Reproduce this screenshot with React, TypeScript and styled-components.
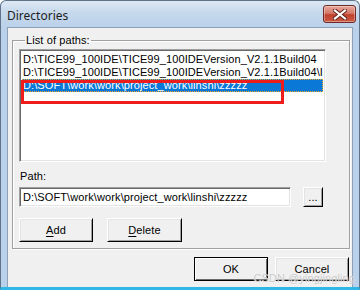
import styled, { createGlobalStyle } from 'styled-components'

const Global = createGlobalStyle`
  html, body {
    margin: 0;
    padding: 0;
    background: #ffffff;
  }
  * {
    box-sizing: border-box;
  }
`

const paths = [
  'D:\\TICE99_100IDE\\TICE99_100IDEVersion_V2.1.1Build04',
  'D:\\TICE99_100IDE\\TICE99_100IDEVersion_V2.1.1Build04\\Include',
  'D:\\SOFT\\work\\work\\project_work\\linshi\\zzzzz',
]

const Window = styled.div`
  position: relative;
  width: 360px;
  height: 290px;
  display: flex;
  flex-direction: column;
  background: linear-gradient(180deg, #dde8f4 0px, #c6d8ec 12px, #b9d1ea 28px, #b9d1ea 100%);
  border: 1px solid #5f7389;
  border-bottom: 3px solid #2fb8e6;
  border-radius: 6px 6px 0 0;
  font-family: 'Liberation Sans', Arial, sans-serif;
  font-size: 11px;
  letter-spacing: 0.1px;
  color: #000;
`

const TitleBar = styled.div`
  height: 26px;
  display: flex;
  align-items: flex-start;
  padding-left: 6px;
`

const Title = styled.span`
  font-family: 'Noto Sans', 'Open Sans', sans-serif;
  font-size: 12px;
  letter-spacing: 0;
  line-height: 16px;
  margin-top: 7px;
  color: #1e1e1e;
`

const CloseButton = styled.div`
  margin-left: auto;
  margin-right: 3px;
  margin-top: 4px;
  width: 33px;
  height: 18px;
  border: 1px solid #6e2a25;
  border-radius: 3px;
  background: linear-gradient(180deg, #e9a89b 0%, #d47a6a 45%, #c0412d 55%, #cc5a45 100%);
  box-shadow: inset 0 0 0 1px rgba(255, 255, 255, 0.35);
  display: flex;
  align-items: center;
  justify-content: center;
`

const Client = styled.div`
  flex: 1;
  margin: 0 6px 0 6px;
  background: #f0f0f0;
  border: 1px solid #8da1b7;
  border-bottom: none;
  display: flex;
  flex-direction: column;
  padding: 6px 2px 0 4px;
`

const Group = styled.fieldset`
  margin: 0;
  padding: 2px 23px 6px 6px;
  border: 1px solid #a0a0a0;
  box-shadow: 1px 1px 0 #ffffff, inset 1px 1px 0 #ffffff;
  min-width: 0;
`

const Legend = styled.legend`
  padding: 0 1px;
  margin-left: 6px;
  line-height: 13px;
  font-size: 11px;
`

const ListBox = styled.div`
  height: 113px;
  background: #ffffff;
  border: 1px solid #a0a0a0;
  border-right-color: #ffffff;
  border-bottom-color: #ffffff;
  box-shadow: inset 1px 1px 0 #696969, inset -1px -1px 0 #e3e3e3;
  padding: 3px 2px;
  overflow: hidden;
`

const Row = styled.div<{ $selected?: boolean }>`
  height: 13px;
  line-height: 13px;
  padding-left: 1px;
  white-space: nowrap;
  overflow: hidden;
  background: ${({ $selected }) => ($selected ? '#0a78d7' : 'transparent')};
  color: ${({ $selected }) => ($selected ? '#ffffff' : '#000000')};
  outline: ${({ $selected }) => ($selected ? '1px dotted #f5a623' : 'none')};
  outline-offset: -1px;
`

const FieldLabel = styled.div`
  margin-top: 8px;
  line-height: 13px;
  padding-left: 1px;
`

const FieldRow = styled.div`
  margin-top: 4px;
  display: flex;
  gap: 12px;
`

const TextBox = styled.div`
  width: 272px;
  height: 20px;
  background: #ffffff;
  border: 1px solid #a0a0a0;
  border-right-color: #ffffff;
  border-bottom-color: #ffffff;
  box-shadow: inset 1px 1px 0 #696969, inset -1px -1px 0 #e3e3e3;
  padding: 0 3px;
  line-height: 18px;
  white-space: nowrap;
  overflow: hidden;
`

const Button = styled.div<{ $w: number; $h?: number; $default?: boolean }>`
  width: ${({ $w }) => $w}px;
  height: ${({ $h }) => $h ?? 24}px;
  background: #f0f0f0;
  border: 1px solid ${({ $default }) => ($default ? '#000000' : '#ffffff')};
  border-right-color: #000000;
  border-bottom-color: #000000;
  box-shadow: ${({ $default }) =>
    $default
      ? 'inset 1px 1px 0 #ffffff, inset -1px -1px 0 #696969'
      : 'inset 1px 1px 0 #e3e3e3, inset -1px -1px 0 #a0a0a0'};
  display: flex;
  align-items: center;
  justify-content: center;
  line-height: 13px;
  flex-shrink: 0;

  u {
    text-decoration: underline;
    text-underline-offset: 2px;
  }
`

const ButtonRow = styled.div`
  margin-top: 11px;
  display: flex;
  gap: 14px;
`

const Footer = styled.div`
  margin-top: 8px;
  display: flex;
  justify-content: flex-end;
  gap: 7px;
  padding-right: 1px;
`

// red annotation box drawn over the selected list entry
const Highlight = styled.div`
  position: absolute;
  left: 20px;
  top: 79px;
  width: 263px;
  height: 24px;
  border: 3px solid #ee1c1c;
  pointer-events: none;
`

const Watermark = styled.div`
  position: absolute;
  right: 4px;
  bottom: 3px;
  font-family: 'Liberation Sans', Arial, sans-serif;
  font-size: 11px;
  color: rgba(190, 190, 190, 0.85);
  text-shadow: 0 0 1px #ffffff;
  pointer-events: none;
`

function CloseGlyph() {
  return (
    <svg width="14" height="11" viewBox="0 0 14 11">
      <path d="M2 1.5 L12 9.5 M12 1.5 L2 9.5" stroke="#5a1f18" strokeWidth="4" strokeLinecap="square" />
      <path d="M2 1.5 L12 9.5 M12 1.5 L2 9.5" stroke="#ffffff" strokeWidth="2.2" strokeLinecap="square" />
    </svg>
  )
}

export default function App() {
  return (
    <>
      <Global />
      <Window>
        <TitleBar>
          <Title>Directories</Title>
          <CloseButton>
            <CloseGlyph />
          </CloseButton>
        </TitleBar>
        <Client>
          <Group>
            <Legend>List of paths:</Legend>
            <ListBox>
              {paths.map((p, i) => (
                <Row key={p} $selected={i === 2}>
                  {p}
                </Row>
              ))}
            </ListBox>
            <FieldLabel>Path:</FieldLabel>
            <FieldRow>
              <TextBox>D:\SOFT\work\work\project_work\linshi\zzzzz</TextBox>
              <Button $w={20} $h={20}>...</Button>
            </FieldRow>
            <ButtonRow>
              <Button $w={74}>
                <span>
                  <u>A</u>dd
                </span>
              </Button>
              <Button $w={75}>
                <span>
                  <u>D</u>elete
                </span>
              </Button>
            </ButtonRow>
          </Group>
          <Footer>
            <Button $w={74} $default>
              OK
            </Button>
            <Button $w={74}>Cancel</Button>
          </Footer>
        </Client>
        <Highlight />
        <Watermark>CSDN @yingjingling</Watermark>
      </Window>
    </>
  )
}
